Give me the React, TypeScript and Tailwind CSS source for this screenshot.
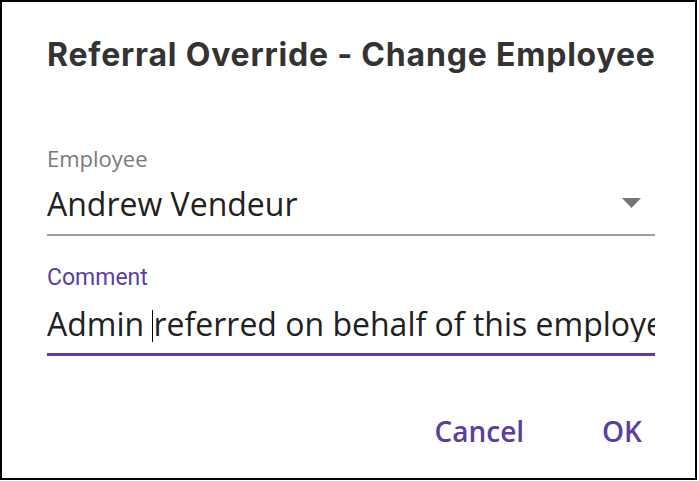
import React from "react";

const sans = { fontFamily: '"Open Sans", "Noto Sans", sans-serif' };

export default function App() {
  return (
    <div className="w-[699px] h-[481px] bg-white">
      <div
        className="w-[697px] h-[480px] border-2 border-black bg-white pl-[45px] pr-[40px] pt-[36px] flex flex-col"
        style={sans}
      >
        <h1 className="font-['Inter',sans-serif] font-bold text-[32px] leading-[34px] tracking-[0.8px] text-[#333333] whitespace-nowrap">
          Referral Override - Change Employee
        </h1>

        {/* Employee select */}
        <div className="mt-[74px] border-b-2 border-[#9e9e9e] pb-[12px]">
          <div className="text-[22px] leading-[24px] text-[#7a7a7a]">Employee</div>
          <div className="mt-[16px] flex items-center h-[36px]">
            <span className="text-[32px] leading-[36px] text-[#212121]">Andrew Vendeur</span>
            <svg className="ml-auto mr-[14px] -mt-[2px]" width="19" height="10" viewBox="0 0 19 10">
              <path d="M0 0 L19 0 L9.5 10 Z" fill="#757575" />
            </svg>
          </div>
        </div>

        {/* Comment input */}
        <div className="mt-[30px] border-b-[3px] border-[#5b3f9f] pb-[11px]">
          <div className="font-['Roboto',sans-serif] text-[23px] leading-[24px] text-[#5b3f9f]">Comment</div>
          <div className="mt-[16px] h-[36px] overflow-hidden whitespace-nowrap text-[32px] leading-[36px] text-[#212121]">
            <span>Admin </span>
            <span className="inline-block w-px h-[35px] bg-black align-middle"></span>
            <span>referred on behalf of this employee</span>
          </div>
        </div>

        {/* Actions */}
        <div className="mt-[59px] flex justify-end gap-[78px] pr-[13px]">
          <button className="text-[28px] leading-[32px] font-semibold text-[#5b3f9f]">Cancel</button>
          <button className="text-[28px] leading-[32px] font-semibold text-[#5b3f9f]">OK</button>
        </div>
      </div>
    </div>
  );
}
